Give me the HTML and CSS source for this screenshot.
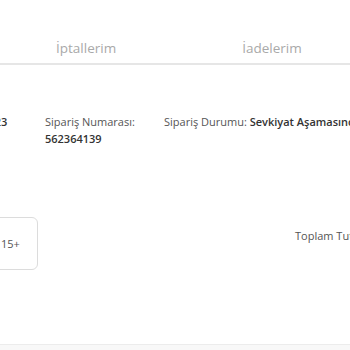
FILE: index.html
```
<!DOCTYPE html>
<html lang="tr">

<head>
    <meta charset="UTF-8">
    <meta name="viewport" content="width=device-width, initial-scale=1.0">
    <title>Siparişlerim</title>
    <link rel="stylesheet" href="styles.css">
</head>

<body>
    <div class="page">
        <div class="tabs">
            <div class="tab">İptallerim</div>
            <div class="tab">İadelerim</div>
        </div>

        <div class="order">
            <div class="order-head">
                <div class="col date">03.10.2023</div>
                <div class="col number">
                    <p>Sipariş Numarası:</p>
                    <b>562364139</b>
                </div>
                <div class="col status">
                    <p>Sipariş Durumu: <b>Sevkiyat Aşamasında</b></p>
                </div>
            </div>

            <div class="order-body">
                <div class="thumbs">
                    <div class="more">15+</div>
                </div>
                <div class="total">Toplam Tutar</div>
            </div>
        </div>

        <div class="footer"></div>
    </div>
</body>

</html>
```

FILE: styles.css
```
* {
    margin: 0;
    padding: 0;
    box-sizing: border-box;
}

body {
    font-family: 'Open Sans', 'Liberation Sans', sans-serif;
    font-size: 11px;
    color: #555;
    background: white;
    overflow: hidden;
}

.page {
    width: 350px;
    height: 350px;
    display: flex;
    flex-direction: column;
}

.tabs {
    display: flex;
    height: 65px;
    padding-top: 39px;
    border-bottom: 2px solid #e6e6e6;
}

.tab {
    font-size: 13.5px;
    color: #a9a9a9;
}

.tab:first-child {
    margin-left: 56px;
}

.tab:last-child {
    margin-left: 126px;
}

.order {
    flex: 1;
    display: flex;
    flex-direction: column;
}

.order-head {
    display: flex;
    padding-top: 48px;
    margin-left: -49px;
    white-space: nowrap;
}

.order-head b {
    font-weight: 600;
    color: #333;
}

.col {
    flex-shrink: 0;
    line-height: 17px;
}

.date {
    width: 94px;
    font-weight: 600;
    color: #333;
}

.number {
    width: 119px;
}

.order-body {
    display: flex;
    margin-top: 70px;
}

.thumbs {
    display: flex;
    flex-shrink: 0;
    margin-left: -40px;
}

.more {
    width: 78px;
    height: 53px;
    border: 1px solid #dcdcdc;
    border-radius: 6px;
    display: flex;
    align-items: center;
    padding-left: 40px;
    color: #555;
}

.total {
    flex-shrink: 0;
    margin-left: 257px;
    margin-top: 11px;
    white-space: nowrap;
    color: #555;
}

.footer {
    height: 6px;
    border-top: 1px solid #ececec;
    background: #f8f8f8;
}
```
